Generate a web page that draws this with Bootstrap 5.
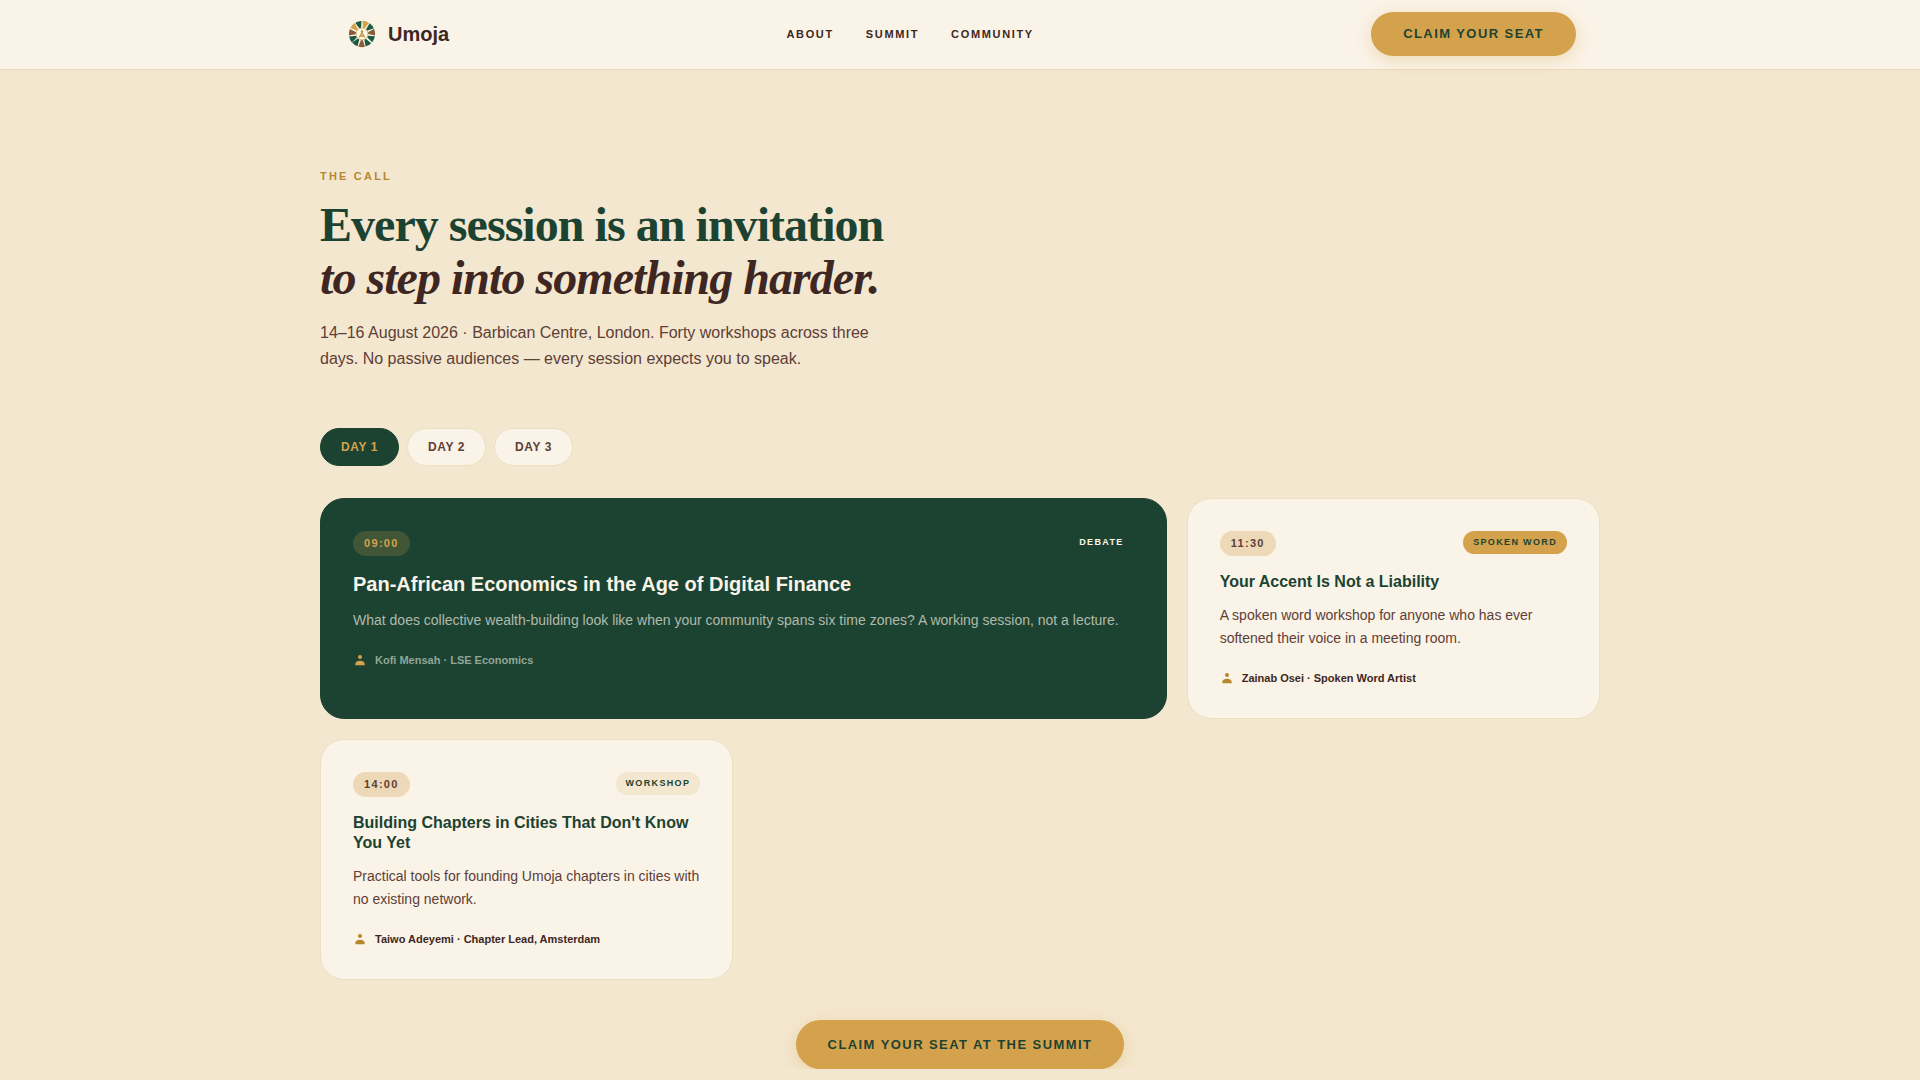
<!DOCTYPE html>
<html lang="en">
<head>
<meta charset="utf-8">
<meta name="viewport" content="width=device-width, initial-scale=1">
<title>Umoja Summit — Sessions</title>
<link href="https://cdn.jsdelivr.net/npm/bootstrap@5.3.0/dist/css/bootstrap.min.css" rel="stylesheet">
<style>
:root { --forest:#1c4332; --gold:#d4a24c; --ochre:#b8862f; --bark:#3e2723; --clay:#5d4037; --sand:#f4e7cf; --cream:#faf3e7; --line:#eedfc3; --peach:#edd8b7; }
body { background:var(--sand); color:var(--bark); font-family:"Liberation Sans", Arial, sans-serif; }
.wrap { max-width:1280px; margin:0 auto; }
.site-bar { background:var(--cream); border-bottom:1px solid #eadabc; }
.site-bar .wrap { padding:12px 24px 13px; }
.brand-mark { width:36px; height:36px; }
.site-name { font-size:20px; line-height:28px; font-weight:700; color:var(--bark); }
.site-nav { gap:32px; }
.site-link { font-size:11px; line-height:18px; font-weight:700; letter-spacing:.15em; text-transform:uppercase; color:var(--bark); text-decoration:none; }
.cta { --bs-btn-color:var(--forest); --bs-btn-bg:var(--gold); --bs-btn-border-width:0; --bs-btn-hover-bg:var(--ochre); --bs-btn-hover-color:var(--forest); --bs-btn-padding-x:32px; --bs-btn-padding-y:12px; --bs-btn-font-size:13px; --bs-btn-font-weight:700; --bs-btn-line-height:20px; letter-spacing:.11em; text-transform:uppercase; box-shadow:0 4px 16px rgba(212,162,76,.3); }
.cta-big { --bs-btn-padding-y:14px; --bs-btn-line-height:21px; }
.cta-row { margin-top:40px; }
.hero { padding-top:96px; }
.eyebrow { font-size:11px; line-height:20px; font-weight:700; letter-spacing:.2em; text-transform:uppercase; color:var(--ochre); margin-bottom:12px; }
.headline { font-family:"Liberation Serif", "Times New Roman", serif; font-size:48px; line-height:53px; font-weight:700; letter-spacing:-.02em; color:var(--forest); margin-bottom:16px; }
.headline em { color:var(--bark); }
.intro { max-width:560px; font-size:16px; line-height:26px; color:var(--clay); margin-bottom:56px; }
.day-tabs { margin-bottom:32px; }
.day { --bs-btn-font-size:12px; --bs-btn-line-height:18px; --bs-btn-font-weight:700; --bs-btn-padding-x:20px; --bs-btn-padding-y:9px; --bs-btn-color:var(--clay); --bs-btn-bg:var(--cream); --bs-btn-border-color:var(--line); --bs-btn-active-bg:var(--forest); --bs-btn-active-color:var(--gold); --bs-btn-active-border-color:var(--forest); letter-spacing:.05em; text-transform:uppercase; }
.sessions { --bs-gutter-x:20px; --bs-gutter-y:20px; }
.session { background:var(--cream); border:1px solid var(--line); border-radius:24px; padding:32px; height:100%; }
.hour { font-size:11px; line-height:17px; font-weight:700; letter-spacing:.12em; padding:4px 11px; background:var(--peach); color:var(--clay); }
.kind { font-size:9px; line-height:15px; font-weight:700; letter-spacing:.15em; padding:4px 10px; text-transform:uppercase; background:var(--sand); color:var(--forest); }
.kind-gold { background:var(--gold); }
.session-title { font-size:16px; line-height:20px; font-weight:700; color:var(--forest); margin:16px 0 12px; }
.session-text { font-size:14px; line-height:23px; color:var(--clay); margin-bottom:20px; }
.host { font-size:11px; line-height:16px; font-weight:700; gap:8px; }
.host svg { width:14px; height:14px; fill:var(--ochre); }
.featured { background:var(--forest); border-color:var(--forest); }
.featured .hour { background:#405637; color:var(--gold); }
.featured .kind { background:transparent; color:var(--cream); }
.featured .session-title { font-size:20px; line-height:25px; color:var(--cream); }
.featured .session-text { color:#b0baaa; }
.featured .host { color:#93a595; }
.featured .host svg { fill:var(--gold); }
</style>
<script src="https://cdn.jsdelivr.net/npm/bootstrap@5.3.0/dist/js/bootstrap.bundle.min.js"></script>
</head>
<body>
<svg class="d-none" aria-hidden="true">
  <symbol id="person" viewBox="0 0 14 14"><circle cx="7" cy="4" r="2"/><path d="M2.3 12.3V11C2.3 9 4 7.7 7 7.7S11.7 9 11.7 11v1.3z"/></symbol>
</svg>
<header class="site-bar">
  <div class="wrap d-flex flex-wrap justify-content-between align-items-center">
    <a href="#" class="d-flex align-items-center gap-2 text-decoration-none">
      <svg class="brand-mark" viewBox="-18 -18 36 36" aria-hidden="true">
        <defs><path id="blade" d="M-1-6L-3.4-12.7A13.100 13.100 0 0 1 3.2-12.7L.8-6z"/></defs>
        <circle r="13" fill="#fffaf0"/>
        <g fill="#1b5a41"><use href="#blade" transform="rotate(-16)"/><use href="#blade" transform="rotate(50)"/><use href="#blade" transform="rotate(115)"/><use href="#blade" transform="rotate(150)"/><use href="#blade" transform="rotate(215)"/><use href="#blade" transform="rotate(245)"/></g>
        <g fill="#d4a24c"><use href="#blade" transform="rotate(18)"/><use href="#blade" transform="rotate(312)"/></g>
        <g fill="#8b5a3c"><use href="#blade" transform="rotate(82)"/><use href="#blade" transform="rotate(182)"/><use href="#blade" transform="rotate(278)"/></g>
        <circle r="6" fill="#fffaf0" stroke="#d9b26b" stroke-width="1"/>
        <circle cy="-2.500" r="1.300" fill="#c8913a"/>
        <path d="M0-1.500L-2.800 3.500M0-1.500L2.800 3.500M-2 2H2" fill="none" stroke="#c8913a" stroke-width="1.300"/>
      </svg>
      <span class="site-name">Umoja</span>
    </a>
    <nav class="site-nav d-flex">
      <a class="site-link" href="#">About</a><a class="site-link" href="#">Summit</a><a class="site-link" href="#">Community</a>
    </nav>
    <button type="button" class="btn cta rounded-pill">Claim your seat</button>
  </div>
</header>
<main class="wrap">
  <section class="hero">
    <p class="eyebrow">The call</p>
    <h1 class="headline">Every session is an invitation<br><em>to step into something harder.</em></h1>
    <p class="intro">14–16 August 2026 · Barbican Centre, London. Forty workshops across three days. No passive audiences — every session expects you to speak.</p>
  </section>
  <div class="day-tabs d-flex gap-2">
    <button type="button" class="btn day rounded-pill active">Day 1</button>
    <button type="button" class="btn day rounded-pill">Day 2</button>
    <button type="button" class="btn day rounded-pill">Day 3</button>
  </div>
  <div class="row sessions">
    <div class="col-lg-8"><article class="session featured">
      <div class="d-flex justify-content-between align-items-start"><span class="hour rounded-pill">09:00</span><span class="kind rounded-pill">Debate</span></div>
      <h2 class="session-title">Pan-African Economics in the Age of Digital Finance</h2>
      <p class="session-text">What does collective wealth-building look like when your community spans six time zones? A working session, not a lecture.</p>
      <div class="host d-flex align-items-center"><svg aria-hidden="true"><use href="#person"/></svg>Kofi Mensah · LSE Economics</div>
    </article></div>
    <div class="col-lg-4"><article class="session">
      <div class="d-flex justify-content-between align-items-start"><span class="hour rounded-pill">11:30</span><span class="kind kind-gold rounded-pill">Spoken word</span></div>
      <h2 class="session-title">Your Accent Is Not a Liability</h2>
      <p class="session-text">A spoken word workshop for anyone who has ever softened their voice in a meeting room.</p>
      <div class="host d-flex align-items-center"><svg aria-hidden="true"><use href="#person"/></svg>Zainab Osei · Spoken Word Artist</div>
    </article></div>
    <div class="col-lg-4"><article class="session">
      <div class="d-flex justify-content-between align-items-start"><span class="hour rounded-pill">14:00</span><span class="kind rounded-pill">Workshop</span></div>
      <h2 class="session-title">Building Chapters in Cities That Don't Know You Yet</h2>
      <p class="session-text">Practical tools for founding Umoja chapters in cities with no existing network.</p>
      <div class="host d-flex align-items-center"><svg aria-hidden="true"><use href="#person"/></svg>Taiwo Adeyemi · Chapter Lead, Amsterdam</div>
    </article></div>
  </div>
  <div class="cta-row text-center"><button type="button" class="btn cta cta-big rounded-pill">Claim your seat at the summit</button></div>
</main>
</body>
</html>
